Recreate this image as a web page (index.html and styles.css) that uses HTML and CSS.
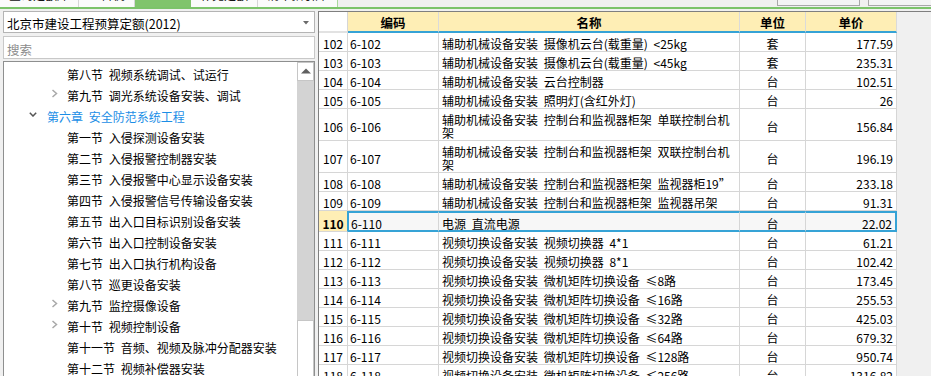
FILE: index.html
```html
<!DOCTYPE html>
<html lang="zh-CN">
<head>
<meta charset="utf-8">
<link rel="stylesheet" href="styles.css">
</head>
<body>
<div class="topbar">
  <div class="tab t1"><span>查询定额库</span></div>
  <div class="tab t2"><span>工料机</span></div>
  <div class="tab t3 active"><span>定额</span></div>
  <div class="tab t4"><span>补充定额</span></div>
  <div class="tab t5"><span>清单指引库</span></div>
  <div class="btns">
    <div class="btn b1"></div>
    <div class="btn b2"></div>
  </div>
</div>
<div class="main">
  <div class="left">
    <div class="select">
      <span class="sel-text">北京市建设工程预算定额(2012)</span>
      <svg class="dd" width="6" height="4" viewBox="0 0 6 4"><polygon points="0,0 6,0 3,3.5" fill="#6a6a6a"/></svg>
    </div>
    <div class="search"><span>搜索</span></div>
    <div class="tree">
      <div class="tree-list">
        <div class="row sec"><span class="slot"></span><span class="label">第八节 视频系统调试、试运行</span></div>
        <div class="row sec"><span class="slot"><svg width="7" height="9" viewBox="0 0 7 9"><polyline points="1.5,1 5.5,4.5 1.5,8" fill="none" stroke="#a8a8a8" stroke-width="1.5"/></svg></span><span class="label">第九节 调光系统设备安装、调试</span></div>
        <div class="row chap"><span class="slot"><svg width="8" height="5" viewBox="0 0 8 5"><polyline points="0.8,0.8 4,4 7.2,0.8" fill="none" stroke="#555" stroke-width="1.5"/></svg></span><span class="label">第六章 安全防范系统工程</span></div>
        <div class="row sec"><span class="slot"></span><span class="label">第一节 入侵探测设备安装</span></div>
        <div class="row sec"><span class="slot"></span><span class="label">第二节 入侵报警控制器安装</span></div>
        <div class="row sec"><span class="slot"></span><span class="label">第三节 入侵报警中心显示设备安装</span></div>
        <div class="row sec"><span class="slot"></span><span class="label">第四节 入侵报警信号传输设备安装</span></div>
        <div class="row sec"><span class="slot"></span><span class="label">第五节 出入口目标识别设备安装</span></div>
        <div class="row sec"><span class="slot"></span><span class="label">第六节 出入口控制设备安装</span></div>
        <div class="row sec"><span class="slot"></span><span class="label">第七节 出入口执行机构设备</span></div>
        <div class="row sec"><span class="slot"></span><span class="label">第八节 巡更设备安装</span></div>
        <div class="row sec"><span class="slot"><svg width="7" height="9" viewBox="0 0 7 9"><polyline points="1.5,1 5.5,4.5 1.5,8" fill="none" stroke="#a8a8a8" stroke-width="1.5"/></svg></span><span class="label">第九节 监控摄像设备</span></div>
        <div class="row sec"><span class="slot"><svg width="7" height="9" viewBox="0 0 7 9"><polyline points="1.5,1 5.5,4.5 1.5,8" fill="none" stroke="#a8a8a8" stroke-width="1.5"/></svg></span><span class="label">第十节 视频控制设备</span></div>
        <div class="row sec"><span class="slot"></span><span class="label">第十一节 音频、视频及脉冲分配器安装</span></div>
        <div class="row sec"><span class="slot"></span><span class="label">第十二节 视频补偿器安装</span></div>
      </div>
      <div class="scroll">
        <div class="sb-up"><svg width="10" height="6" viewBox="0 0 10 6"><polygon points="0,5.5 10,5.5 5,0.5" fill="#606060"/></svg></div>
        <div class="sb-thumb"></div>
        <div class="sb-track"></div>
      </div>
    </div>
  </div>
  <div class="right">
    <table class="grid">
      <thead>
        <tr>
          <th class="c-no"></th>
          <th class="c-code">编码</th>
          <th class="c-name">名称</th>
          <th class="c-unit">单位</th>
          <th class="c-price">单价</th>
        </tr>
      </thead>
      <tbody>
        <tr><td class="no">102</td><td class="code">6-102</td><td class="name">辅助机械设备安装 摄像机云台(载重量) &lt;25kg</td><td class="unit">套</td><td class="price">177.59</td></tr>
        <tr><td class="no">103</td><td class="code">6-103</td><td class="name">辅助机械设备安装 摄像机云台(载重量) &lt;45kg</td><td class="unit">套</td><td class="price">235.31</td></tr>
        <tr><td class="no">104</td><td class="code">6-104</td><td class="name">辅助机械设备安装 云台控制器</td><td class="unit">台</td><td class="price">102.51</td></tr>
        <tr><td class="no">105</td><td class="code">6-105</td><td class="name">辅助机械设备安装 照明灯(含红外灯)</td><td class="unit">台</td><td class="price">26</td></tr>
        <tr><td class="no">106</td><td class="code">6-106</td><td class="name">辅助机械设备安装 控制台和监视器柜架 单联控制台机架</td><td class="unit">台</td><td class="price">156.84</td></tr>
        <tr><td class="no">107</td><td class="code">6-107</td><td class="name">辅助机械设备安装 控制台和监视器柜架 双联控制台机架</td><td class="unit">台</td><td class="price">196.19</td></tr>
        <tr><td class="no">108</td><td class="code">6-108</td><td class="name">辅助机械设备安装 控制台和监视器柜架 监视器柜19”</td><td class="unit">台</td><td class="price">233.18</td></tr>
        <tr><td class="no">109</td><td class="code">6-109</td><td class="name">辅助机械设备安装 控制台和监视器柜架 监视器吊架</td><td class="unit">台</td><td class="price">91.31</td></tr>
        <tr class="sel"><td class="no">110</td><td class="code">6-110</td><td class="name">电源 直流电源</td><td class="unit">台</td><td class="price">22.02</td></tr>
        <tr><td class="no">111</td><td class="code">6-111</td><td class="name">视频切换设备安装 视频切换器 4*1</td><td class="unit">台</td><td class="price">61.21</td></tr>
        <tr><td class="no">112</td><td class="code">6-112</td><td class="name">视频切换设备安装 视频切换器 8*1</td><td class="unit">台</td><td class="price">102.42</td></tr>
        <tr><td class="no">113</td><td class="code">6-113</td><td class="name">视频切换设备安装 微机矩阵切换设备 ≤8路</td><td class="unit">台</td><td class="price">173.45</td></tr>
        <tr><td class="no">114</td><td class="code">6-114</td><td class="name">视频切换设备安装 微机矩阵切换设备 ≤16路</td><td class="unit">台</td><td class="price">255.53</td></tr>
        <tr><td class="no">115</td><td class="code">6-115</td><td class="name">视频切换设备安装 微机矩阵切换设备 ≤32路</td><td class="unit">台</td><td class="price">425.03</td></tr>
        <tr><td class="no">116</td><td class="code">6-116</td><td class="name">视频切换设备安装 微机矩阵切换设备 ≤64路</td><td class="unit">台</td><td class="price">679.32</td></tr>
        <tr><td class="no">117</td><td class="code">6-117</td><td class="name">视频切换设备安装 微机矩阵切换设备 ≤128路</td><td class="unit">台</td><td class="price">950.74</td></tr>
        <tr><td class="no">118</td><td class="code">6-118</td><td class="name">视频切换设备安装 微机矩阵切换设备 ≤256路</td><td class="unit">台</td><td class="price">1316.82</td></tr>
      </tbody>
    </table>
  </div>
</div>
</body>
</html>
```

FILE: styles.css
```css
* { box-sizing: border-box; }
html, body { margin: 0; padding: 0; }
body {
  width: 931px;
  height: 376px;
  overflow: hidden;
  background: #f0f0f0;
  font-family: "Noto Sans CJK SC", "Noto Sans", sans-serif;
  font-size: 12px;
  color: #000;
}

/* top tab strip */
.topbar {
  display: flex;
  height: 9px;
  border-bottom: 2px solid #7cc36a;
}
.tab {
  height: 7px;
  overflow: hidden;
  background: #fbfbfb;
  border-right: 1px solid #d6d6d6;
  text-align: center;
}
.tab span {
  display: block;
  margin-top: -13px;
  line-height: 16px;
  font-size: 12px;
  color: #111;
}
.t1 { width: 79px; }
.t2 { width: 56px; }
.t3 { width: 56px; }
.t4 { width: 67px; }
.t5 { width: 80px; border-right-color: #a9d99c; }
.tab.active { background: #80c46c; border-right-color: #80c46c; }
.tab.active span { color: #80c46c; }
.btns {
  display: flex;
  gap: 8px;
  margin-left: auto;
  margin-right: -10px;
}
.btn {
  height: 6px;
  background: #f4f4f4;
  border: 1px solid #a8a8a8;
  border-top: none;
}
.b1 { width: 83px; }
.b2 { width: 73px; }

/* main split */
.main {
  display: flex;
  gap: 3px;
  padding-left: 3px;
  margin-top: 2px;
}
.left {
  width: 312px;
  display: flex;
  flex-direction: column;
}
.select {
  height: 22px;
  border: 1px solid #b4b4b4;
  background: #fff;
  display: flex;
  align-items: center;
  justify-content: space-between;
  padding: 0 5px 0 3px;
  margin-bottom: 3px;
  font-size: 12.5px;
}
.sel-text { line-height: 16px; padding-top: 3px; }
.dd { margin-top: 1px; }
.search {
  height: 23px;
  border: 1px solid #c8c8c8;
  background: #fff;
  padding: 3px 3px 0;
  line-height: 19px;
  color: #8c8c8c;
  font-size: 12.5px;
  margin-bottom: 2px;
}
.tree {
  height: 330px;
  border: 1px solid #8e8f8f;
  background: #fff;
  display: flex;
}
.tree-list {
  flex: 1;
  overflow: hidden;
}
.row {
  height: 21px;
  display: flex;
  white-space: nowrap;
  word-spacing: 3px;
}
.row.sec { padding-left: 47px; }
.row.sec .slot { width: 16px; }
.row.chap { padding-left: 25px; }
.row.chap .slot { width: 18px; }
.row.chap .label { color: #1b8ee6; }
.slot { display: flex; align-items: center; height: 21px; }
.label { line-height: 17px; padding-top: 4px; }

.scroll {
  width: 17px;
  display: flex;
  flex-direction: column;
}
.sb-up {
  height: 19px;
  border: 1px solid #c6c6c6;
  background: #fff;
  display: flex;
  align-items: center;
  justify-content: center;
  padding-bottom: 2px;
}
.sb-thumb {
  height: 239px;
  background: #d3d3d3;
}
.sb-track {
  flex: 1;
  background: #fff;
  border: 1px solid #c6c6c6;
}

/* right grid */
.right {
  flex: 1;
  height: 370px;
  border-top: 1px solid #7f7f7f;
  border-left: 1px solid #7f7f7f;
  background: #f0f0f0;
  overflow: hidden;
}
.grid {
  width: 578px;
  table-layout: fixed;
  border-collapse: separate;
  border-spacing: 0;
  background: #fff;
}
.grid th {
  height: 21px;
  padding: 2px 0 0;
  line-height: 17px;
  font-weight: bold;
  font-size: 12.5px;
  background: #feeeb5;
  border-right: 1px solid #dadada;
  border-bottom: 2px solid #36a3d6;
  text-align: center;
}
.grid th.c-no { background: #fff; border-bottom: 2px solid #e2e2e2; border-right: 1px solid #d6d6d6; }
.c-no { width: 29px; }
.c-code { width: 91px; }
.c-name { width: 301px; }
.c-unit { width: 66px; }
.c-price { width: 91px; }

.grid td {
  padding: 4px 3px 1px;
  line-height: 13px;
  border-right: 1px solid #d6d6d6;
  border-bottom: 1px solid #d6d6d6;
  vertical-align: middle;
  word-spacing: 3px;
}
.grid td.no { text-align: center; padding: 4px 0 1px; }
.grid td.code { padding-left: 2px; }
.grid td.unit { text-align: center; }
.grid td.price { text-align: right; padding-right: 3px; }
.grid td.name { word-break: break-all; }

.grid tr.sel td {
  padding-top: 4px;
  padding-bottom: 0;
  background: #f7f7f7;
  border-top: 2px solid #36a3d6;
  border-bottom: 2px solid #36a3d6;
}
.grid tr.sel td.no {
  background: #feeeb5;
  font-weight: bold;
  border-top: none;
  border-bottom: 1px solid #d6d6d6;
  border-right: 1px solid #36a3d6;
  padding-top: 6px;
  padding-bottom: 1px;
}
.grid tr.sel td.code { border-left: 1px solid #36a3d6; }
.grid tr.sel td.price { border-right: 2px solid #36a3d6; }
```
